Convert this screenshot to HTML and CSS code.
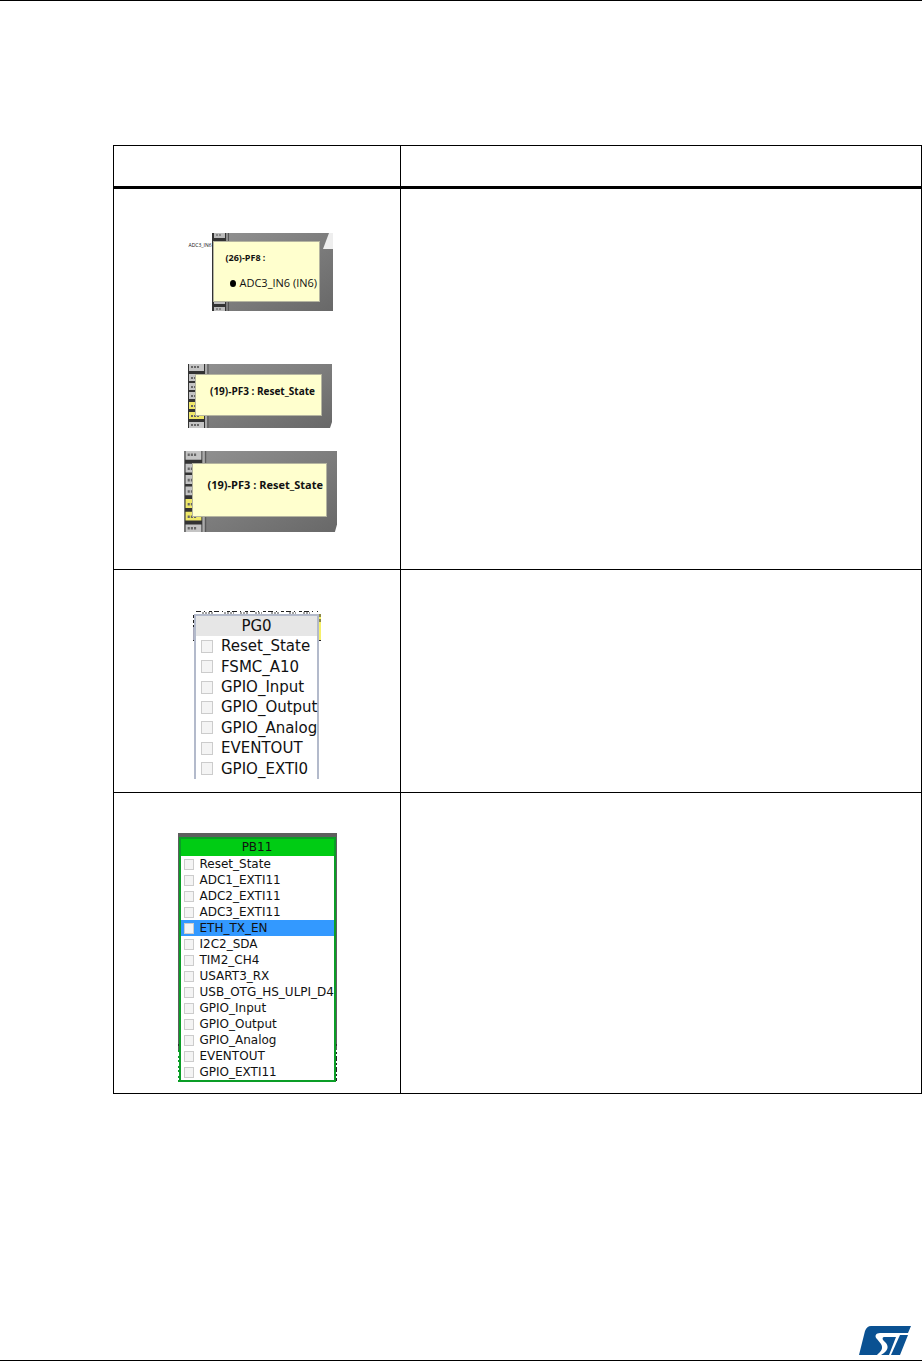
FILE: index.html
```html
<!DOCTYPE html>
<html lang="en">
  <head>
    <meta charset="UTF-8" />
    <meta name="viewport" content="width=device-width, initial-scale=1.0" />
    <title>Pinout view</title>
    <link rel="stylesheet" href="styles.css">
  </head>
  <body>
    <main class="content">
      <table class="doc-table">
        <thead>
          <tr>
            <th class="col-view"></th>
            <th></th>
          </tr>
        </thead>
        <tbody>
          <tr>
            <td class="tips">
              <figure class="shot shot-adc">
                <svg class="scene" viewBox="0 0 153 78" preserveAspectRatio="none" aria-hidden="true">
                  <defs>
                    <linearGradient id="chip" x1="0" y1="0" x2="1" y2="1">
                      <stop offset="0" stop-color="#929292" />
                      <stop offset="1" stop-color="#686868" />
                    </linearGradient>
                  </defs>
                  <rect width="153" height="78" fill="#fff" />
                  <rect x="32" width="121" height="78" fill="url(#chip)" />
                  <path d="M32 0h14v78H32z" fill="#333" />
                  <path d="M34 0h11v5H34zM34 69h11v2H34zM34 74h11v4H34z" fill="#bbb" />
                  <path d="M36 2h6M36 76h6" stroke="#555" stroke-dasharray="2 1" />
                  <path d="M48.500 0v78" stroke="#555" />
                  <path d="M149 0h4v16h-10z" fill="#eee" />
                </svg>
                <span class="pin-label">ADC3_IN6</span>
                <div class="tip">
                  <strong>(26)-PF8 :</strong>
                  <ul>
                    <li>ADC3_IN6 (IN6)</li>
                  </ul>
                </div>
              </figure>
              <figure class="shot shot-reset">
                <svg class="scene" viewBox="0 0 152 64" preserveAspectRatio="none" aria-hidden="true">
                  <g id="pins">
                    <rect width="152" height="64" fill="#fff" />
                    <path d="M8 0h144v58l-2 6H8z" fill="url(#chip)" />
                    <path d="M8 0h17v64H8z" fill="#333" />
                    <path d="M9 0h15v7H9zM9 10h14v7H9zM9 19h14v7H9zM9 28h14v7H9zM9 58h15v6H9z" fill="#c4c4c4" />
                    <path d="M9 38h14v7H9zM9 48h15v7H9z" fill="#efe86a" />
                    <path d="M11 3h8M11 14h8M11 23h8M11 32h8M11 42h8M11 52h8M11 61h8" stroke="#666" stroke-width="2" stroke-dasharray="2 1" />
                    <path d="M26 0v64" stroke="#aaa" stroke-width="2" />
                    <path d="M28 0v64" stroke="#555" />
                  </g>
                </svg>
                <div class="tip"><strong>(19)-PF3 : Reset_State</strong></div>
              </figure>
              <figure class="shot shot-reset-large">
                <svg class="scene" viewBox="0 0 152 64" preserveAspectRatio="none" aria-hidden="true">
                  <use href="#pins" />
                </svg>
                <div class="tip"><strong>(19)-PF3 : Reset_State</strong></div>
              </figure>
            </td>
            <td></td>
          </tr>
          <tr>
            <td class="menu-cell">
              <figure class="shot shot-pg0">
                <svg class="scene" viewBox="0 0 128 168" aria-hidden="true">
                  <path d="M122 3h6v26h-6z" fill="#f6f06a" />
                  <path d="M0 4v12" stroke="#222" stroke-width="2" stroke-dasharray="3 2" />
                  <path d="M0 16v14" stroke="#aab" stroke-width="2" />
                  <path d="M3 .5h122" stroke="#222" stroke-dasharray="5 3 1 4 3 2" />
                  <path d="M9 2h12M31 2h10M47 2h8M62 2h7M78 2h9M96 2h7M110 2h7" stroke="#444" stroke-dasharray="2 1" />
                  <path d="M127 3v10" stroke="#222" stroke-dasharray="3 2" />
                  <path d="M126 29.500h2M0 29.500h2" stroke="#222" />
                </svg>
                <div class="menu menu-pg0">
                  <div class="menu-title">PG0</div>
                  <label><input type="checkbox">Reset_State</label>
                  <label><input type="checkbox">FSMC_A10</label>
                  <label><input type="checkbox">GPIO_Input</label>
                  <label><input type="checkbox">GPIO_Output</label>
                  <label><input type="checkbox">GPIO_Analog</label>
                  <label><input type="checkbox">EVENTOUT</label>
                  <label><input type="checkbox">GPIO_EXTI0</label>
                </div>
              </figure>
            </td>
            <td></td>
          </tr>
          <tr>
            <td class="menu-cell menu-cell-last">
              <figure class="shot shot-pb11">
                <svg class="scene" viewBox="0 0 159 249" preserveAspectRatio="none" aria-hidden="true">
                  <rect width="159" height="249" fill="#5e5e5e" />
                  <path d="M0 212h2M157 212h2" stroke="#000" />
                  <path d="M0 217h2v32H0z" fill="#0a9d26" />
                  <path d="M0 219v29" stroke="#fff" stroke-width="2" stroke-dasharray="4 2 2 2" />
                  <path d="M157 217h2v32h-2z" fill="#fff" />
                  <path d="M158.500 219v29" stroke="#222" stroke-dasharray="2 2 5 2" />
                </svg>
                <div class="menu menu-pb11">
                  <div class="menu-title">PB11</div>
                  <label><input type="checkbox">Reset_State</label>
                  <label><input type="checkbox">ADC1_EXTI11</label>
                  <label><input type="checkbox">ADC2_EXTI11</label>
                  <label><input type="checkbox">ADC3_EXTI11</label>
                  <label class="active"><input type="checkbox">ETH_TX_EN</label>
                  <label><input type="checkbox">I2C2_SDA</label>
                  <label><input type="checkbox">TIM2_CH4</label>
                  <label><input type="checkbox">USART3_RX</label>
                  <label><input type="checkbox">USB_OTG_HS_ULPI_D4</label>
                  <label><input type="checkbox">GPIO_Input</label>
                  <label><input type="checkbox">GPIO_Output</label>
                  <label><input type="checkbox">GPIO_Analog</label>
                  <label><input type="checkbox">EVENTOUT</label>
                  <label><input type="checkbox">GPIO_EXTI11</label>
                </div>
              </figure>
            </td>
            <td></td>
          </tr>
        </tbody>
      </table>
    </main>
    <footer class="page-footer">
      <svg class="logo" viewBox="0 0 52 30" role="img" aria-label="ST">
        <path d="M12 0h40l-3 7H21c-4 0-6 3-3 6l4 5c3 5-1 8-4 11H0L6 5q2-5 6-5z" fill="#0a5192" />
        <path d="M25 11h12l-7 18h-8c7-4 8-8 5-12l-3-3c-1-2 0-3 1-3z" fill="#0a5192" />
        <path d="M41 9h8l-8 20h-9z" fill="#0a5192" />
      </svg>
    </footer>
  </body>
</html>
```
FILE: styles.css
```css
* {
  margin: 0;
  padding: 0;
  box-sizing: border-box;
}

:root {
  --line: #000;
  --tip-bg: #ffffce;
  --green: #0a9d26;
}

body {
  font-family: "Open Sans", "Noto Sans", sans-serif;
  background-color: #fff;
  color: #111;
  min-height: 100vh;
  display: flex;
  flex-direction: column;
  border-top: 1px solid var(--line);
  border-bottom: 1px solid var(--line);
}

.content {
  flex: 1;
  padding: 144px 0 0 113px;
}

.doc-table {
  width: 100%;
  table-layout: fixed;
  border-spacing: 0;
  border-top: 1px solid var(--line);
  border-left: 1px solid var(--line);
}

th,
td {
  border-right: 1px solid var(--line);
  border-bottom: 1px solid var(--line);
  vertical-align: top;
}

th {
  height: 43px;
  border-bottom-width: 3px;
}

.col-view {
  width: 287px;
}

.tips {
  padding: 44px 2px 37px 0;
}

.menu-cell {
  padding: 41px 0 13px;
}

.menu-cell-last {
  padding: 40px 0 11px;
}

/* pinout views */
.shot {
  position: relative;
  margin: 0 auto;
}

.scene {
  position: absolute;
  inset: 0;
  width: 100%;
  height: 100%;
}

.shot-adc {
  width: 153px;
  height: 78px;
  padding: 8px 13px 9px 33px;
  margin-bottom: 53px;
}

.shot-reset {
  width: 152px;
  height: 64px;
  padding: 10px 10px 12px 15px;
  margin-bottom: 23px;
}

.shot-reset-large {
  width: 161px;
  height: 81px;
  padding: 12px 10px 15px 16px;
}

.tip {
  position: relative;
  height: 100%;
  background-color: var(--tip-bg);
  border: 1px solid #b5b5a0;
  font-size: 11px;
  line-height: 16px;
  white-space: nowrap;
}

.shot-adc .tip {
  padding: 8px 0 0 12px;
}

.shot-adc strong {
  display: block;
  font-size: 9px;
}

.shot-reset .tip {
  padding: 8px 0 0 14px;
  font-size: 10px;
}

.shot-reset-large .tip {
  padding: 13px 0 0 15px;
}

.tip ul {
  list-style: none;
  padding: 9px 0 0 4px;
}

.tip li {
  display: flex;
  align-items: center;
  gap: 4px;
}

.tip li::before {
  content: "";
  width: 6px;
  height: 7px;
  border-radius: 50%;
  background-color: #000;
}

.pin-label {
  position: absolute;
  top: 8px;
  left: 9px;
  font-size: 5px;
  line-height: 8px;
}

/* signal menus */
.menu {
  position: relative;
  height: 100%;
  display: flex;
  flex-direction: column;
  background-color: #fff;
  font-family: "DejaVu Sans", sans-serif;
  white-space: nowrap;
}

.menu-title {
  text-align: center;
}

.menu label {
  flex: 1;
  display: flex;
  align-items: center;
}

.menu input {
  appearance: none;
  flex: none;
  border: 1px solid #ccc;
  background-color: #f4f4f4;
}

.shot-pg0 {
  width: 128px;
  height: 168px;
  padding: 3px 2px 0 1px;
}

.menu-pg0 {
  border: 2px solid #b3bacb;
  border-bottom: none;
  font-size: 15px;
}

.menu-pg0 .menu-title {
  height: 20px;
  line-height: 20px;
  background-color: #e6e6e6;
}

.menu-pg0 label {
  padding-left: 5px;
  gap: 8px;
}

.menu-pg0 input {
  width: 12px;
  height: 13px;
}

.shot-pb11 {
  width: 159px;
  height: 249px;
  padding: 4px 1px 0;
}

.menu-pb11 {
  border: 2px solid var(--green);
  font-size: 12px;
}

.menu-pb11 .menu-title {
  height: 17px;
  line-height: 17px;
  background-color: #00cc14;
}

.menu-pb11 label {
  padding-left: 3px;
  gap: 6px;
}

.menu-pb11 input {
  width: 10px;
  height: 11px;
}

.menu-pb11 .active {
  background-color: #3399ff;
}

.page-footer {
  display: flex;
  justify-content: flex-end;
  padding: 0 11px 4px 0;
}

.logo {
  width: 52px;
  height: 30px;
}
```
